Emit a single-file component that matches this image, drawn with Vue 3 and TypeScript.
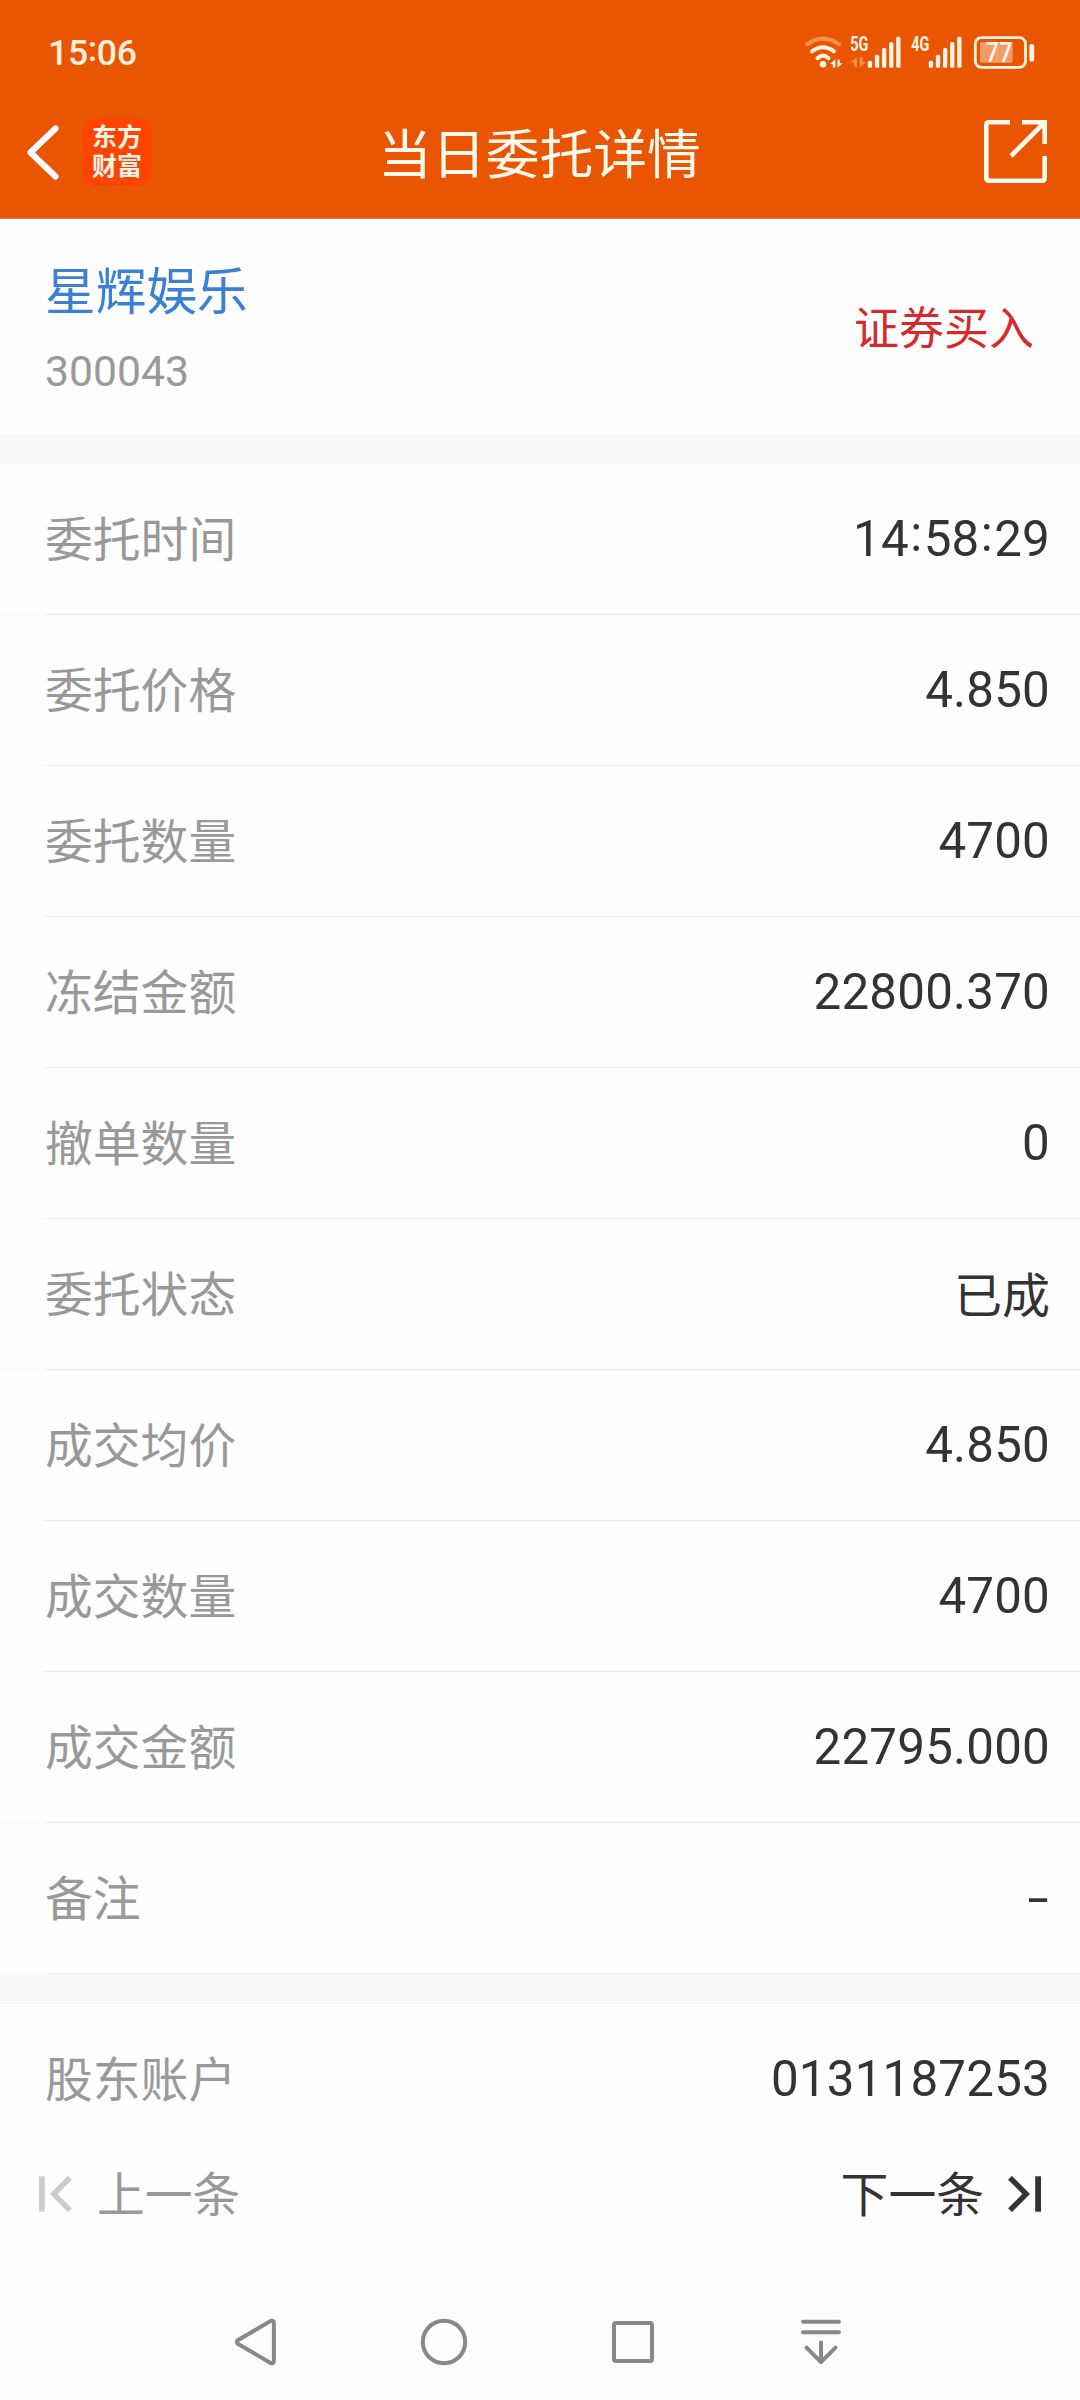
<script setup lang="ts">
interface Row {
  label: string
  value: string
}

const stock = { name: '星辉娱乐', code: '300043', side: '证券买入' }

const rows: Row[] = [
  { label: '委托时间', value: '14:58:29' },
  { label: '委托价格', value: '4.850' },
  { label: '委托数量', value: '4700' },
  { label: '冻结金额', value: '22800.370' },
  { label: '撤单数量', value: '0' },
  { label: '委托状态', value: '已成' },
  { label: '成交均价', value: '4.850' },
  { label: '成交数量', value: '4700' },
  { label: '成交金额', value: '22795.000' },
  { label: '备注', value: '-' },
]

const account: Row = { label: '股东账户', value: '0131187253' }

const isHan = (text: string): boolean => /[\u4e00-\u9fff]/.test(text)
const parts = (text: string): string[] => text.split(/(:)/)

const barTops: number[] = [60.7, 54.7, 48, 42, 36.7]
</script>

<template>
  <div class="page">
    <header class="header">
      <div class="status">
        <span class="clock">15<i class="colon">:</i>06</span>
        <svg class="indicators" width="240" height="40" viewBox="800 32 240 40">
          <g fill="none" stroke-width="4" stroke-linecap="round" stroke="#fff3e4">
            <path d="M807 44.3Q823 33 839 44.3" stroke="#f8904f" />
            <path d="M812 51.4Q823 43 834 51.4" />
            <path d="M817.5 58.2Q823 53.2 828.5 58.2" />
          </g>
          <g fill="#fff3e4">
            <circle cx="823" cy="64.2" r="3.3" />
            <path d="M835.4 67.5h-2.6v-3.6h-3l5.6-4.6zM837.4 59.4h2.4v3.8h2.8l-5.2 4.5z" />
            <path d="M857 67.3h-3v-5h-3.3l6.3-5.5zM859.7 57h3v5h3.3l-6.3 5.5z" fill="#f8904f" />
            <text class="net" x="850.3" y="50.6" textLength="18" lengthAdjust="spacingAndGlyphs">5G</text>
            <text class="net" x="911.3" y="50.6" textLength="18" lengthAdjust="spacingAndGlyphs">4G</text>
            <rect
              v-for="(top, i) in barTops"
              :key="'a' + i"
              :x="867.8 + i * 7.1"
              :y="top"
              width="4.3"
              :height="67.8 - top"
              rx="1.5"
            />
            <rect
              v-for="(top, i) in barTops"
              :key="'b' + i"
              :x="928.8 + i * 7.1"
              :y="top"
              width="4.3"
              :height="67.8 - top"
              rx="1.5"
            />
            <rect x="1029.4" y="44" width="4.8" height="17.7" rx="2" />
          </g>
          <rect x="975.3" y="37.7" width="50.2" height="29.6" rx="6" fill="none" stroke="#fff3e4" stroke-width="2.8" />
          <rect x="980" y="42" width="32.7" height="20.8" rx="2" fill="#f49a68" />
          <text class="level" x="985.5" y="62" textLength="27" lengthAdjust="spacingAndGlyphs">77</text>
        </svg>
      </div>
      <div class="titlebar">
        <div class="left">
          <svg width="34" height="58" viewBox="26 122 34 58">
            <path d="M55.500 127.5 30.500 151.5l25 24" fill="none" stroke="#fff" stroke-width="6.2" stroke-linecap="round" stroke-linejoin="round" />
          </svg>
          <div class="logo"><span>东方财富</span></div>
        </div>
        <h1 class="title">当日委托详情</h1>
        <svg class="share" width="64" height="64" viewBox="984 120 64 64">
          <g fill="none" stroke="#fffaf0" stroke-width="4.6">
            <path d="M1010 122.3h-21q-2.7 0-2.7 2.7v53q0 2.7 2.7 2.7h53q2.7 0 2.7-2.7v-22" />
            <path d="M1022 122.3h22.7v21.7M1044 123l-33 33" />
          </g>
        </svg>
      </div>
    </header>

    <section class="stock">
      <div>
        <div class="name">{{ stock.name }}</div>
        <div class="code">{{ stock.code }}</div>
      </div>
      <div class="side">{{ stock.side }}</div>
    </section>

    <div class="gap"></div>

    <section>
      <div v-for="row in rows" :key="row.label" class="row">
        <span class="label">{{ row.label }}</span>
        <span :class="['value', { han: isHan(row.value), dash: row.value === '-' }]"
          ><template v-for="(part, i) in parts(row.value)" :key="i"
            ><i v-if="part === ':'" class="colon">:</i><template v-else>{{ part }}</template></template
          ></span
        >
      </div>
    </section>

    <div class="gap"></div>

    <div class="row plain">
      <span class="label">{{ account.label }}</span>
      <span class="value">{{ account.value }}</span>
    </div>

    <nav class="pager">
      <div class="step prev">
        <svg width="34" height="36" viewBox="39 0 34 36">
          <path d="M39 .3h5.8v35.4H39z" fill="#ccc" />
          <path d="M70 1.8 53.6 18 70 34.2" fill="none" stroke="#ccc" stroke-width="5.4" />
        </svg>
        <span>上一条</span>
      </div>
      <div class="step next">
        <span>下一条</span>
        <svg width="34" height="36" viewBox="1008 0 34 36">
          <path d="M1010 1.8 1026.2 18 1010 34.2" fill="none" stroke="#333" stroke-width="5.4" />
          <path d="M1035.2 .3h5.8v35.4h-5.8z" fill="#333" />
        </svg>
      </div>
    </nav>

    <footer class="sysnav">
      <svg width="52" height="52" viewBox="230 2316 52 52">
        <path d="M237.7 2340.3 270.6 2321q3.3-1 3.3 2v38q0 3-3.3 2L237.7 2343.700q-1.500-1.700 0-3.400z" />
      </svg>
      <svg width="52" height="52" viewBox="418 2316 52 52">
        <circle cx="444" cy="2342" r="21.2" />
      </svg>
      <svg width="52" height="52" viewBox="606 2316 52 52">
        <rect x="613" y="2323" width="38" height="38" rx="2" />
      </svg>
      <svg width="52" height="52" viewBox="795 2316 52 52">
        <path d="M803 2321.800h36M803 2332.300h36M821 2342.500v19M806.500 2347.700l14.500 14.500 14.500-14.500" />
      </svg>
    </footer>
  </div>
</template>

<style>
body {
  margin: 0;
  background: #fefefe;
}
</style>

<style scoped>
.page {
  width: 1080px;
  height: 2400px;
  display: flex;
  flex-direction: column;
  background: #fefefe;
  font-family: Roboto, 'Noto Sans CJK SC', sans-serif;
  color: #333;
  overflow: hidden;
}

.page svg {
  display: block;
  flex: none;
}

.header {
  height: 219px;
  box-sizing: border-box;
  border-bottom: 1px solid #d8864f;
  background: #ea5502;
  color: #fff8ec;
}

.status {
  height: 84px;
  box-sizing: border-box;
  padding: 20px 40px 0 48px;
  display: flex;
  justify-content: space-between;
  align-items: center;
}

.clock {
  padding-top: 2px;
  font-size: 35.5px;
  font-weight: 500;
  line-height: 40px;
  letter-spacing: -0.3px;
  color: #fff0dc;
}

.colon {
  display: inline-block;
  font-style: normal;
  padding: 0 1.3px;
  transform: translateY(-0.1em);
}

.clock .colon {
  padding: 0;
}

.net {
  font: 700 19.5px Roboto, sans-serif;
}

.level {
  font: 500 27px Roboto, sans-serif;
  fill: #fff8ec;
}

.titlebar {
  height: 136px;
  padding: 0 32px 0 26px;
  display: grid;
  grid-template-columns: 1fr auto 1fr;
  align-items: center;
}

.left {
  display: flex;
  align-items: center;
  gap: 23px;
}

.logo {
  width: 68px;
  height: 68px;
  border-radius: 14px;
  background: #ff4400;
  color: #fff3e8;
  display: flex;
  align-items: center;
  justify-content: center;
  padding-bottom: 5px;
  box-sizing: border-box;
  font-family: 'Noto Sans CJK SC', sans-serif;
  font-size: 25px;
  font-weight: 700;
  line-height: 29px;
}

.logo span {
  width: 50px;
}

.title {
  margin: 0;
  padding: 0 0 3px 5px;
  font-family: 'Noto Sans CJK SC', sans-serif;
  font-size: 53.8px;
  font-weight: 400;
  line-height: 80px;
}

.share {
  justify-self: end;
}

.stock {
  height: 215px;
  box-sizing: border-box;
  padding: 2px 46px 0 45px;
  display: flex;
  justify-content: space-between;
  align-items: center;
}

.name {
  font-family: 'Noto Sans CJK SC', sans-serif;
  font-size: 50.7px;
  line-height: 76px;
  color: #3c80d6;
}

.code {
  margin-top: 13px;
  padding-bottom: 3px;
  font-size: 42.7px;
  line-height: 64px;
  color: #999;
}

.side {
  padding-bottom: 4px;
  font-family: 'Noto Sans CJK SC', sans-serif;
  font-size: 45px;
  line-height: 66px;
  color: #d8292a;
}

.gap {
  height: 30px;
  background: #f6f8fa;
  flex: none;
}

.row {
  height: 151px;
  box-sizing: border-box;
  padding: 0 30px 1px 45px;
  display: flex;
  justify-content: space-between;
  align-items: center;
  background: linear-gradient(to right, #fafafa 45px, #ececec 45px) bottom / 100% 1px no-repeat;
}

.row.plain {
  background: none;
}

.label {
  padding-bottom: 5px;
  font-family: 'Noto Sans CJK SC', sans-serif;
  font-size: 47.8px;
  line-height: 70px;
  color: #999;
}

.value {
  font-size: 49.3px;
  line-height: 70px;
  letter-spacing: 0.2px;
}

.value.han {
  padding-bottom: 5px;
  font-family: 'Noto Sans CJK SC', sans-serif;
  font-size: 48px;
  letter-spacing: 0;
}

.value.dash {
  margin-right: 1px;
  transform: scaleX(1.55);
  transform-origin: right center;
}

.pager {
  height: 129px;
  box-sizing: border-box;
  padding: 0 38px 51px 39px;
  display: flex;
  justify-content: space-between;
  align-items: center;
  font-family: 'Noto Sans CJK SC', sans-serif;
  font-size: 47.8px;
  line-height: 70px;
}

.step {
  display: flex;
  align-items: center;
  gap: 24px;
}

.step span {
  padding-bottom: 5px;
}

.prev {
  color: #999;
}

.sysnav {
  height: 116px;
  padding: 0 164.8px 0 162px;
  background: #fcfcfc;
  display: grid;
  grid-template-columns: repeat(4, 1fr);
  place-items: center;
}

.sysnav svg {
  fill: none;
  stroke: #888;
  stroke-width: 4;
  stroke-linecap: round;
  stroke-linejoin: round;
}
</style>
